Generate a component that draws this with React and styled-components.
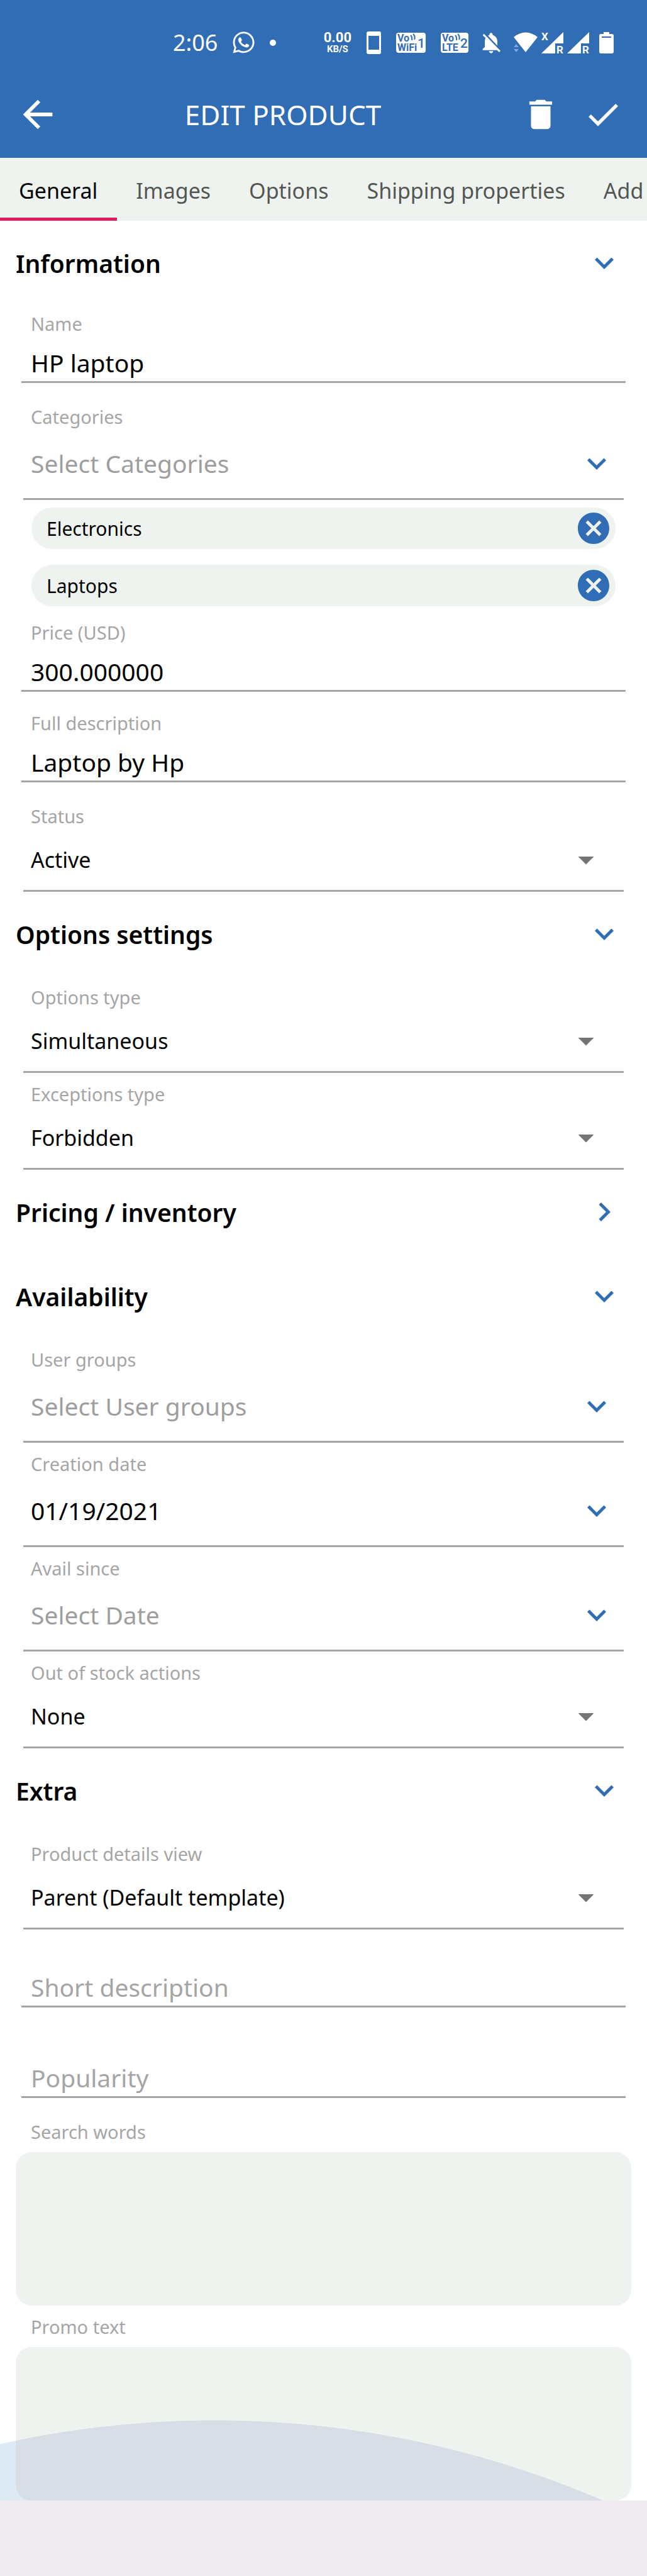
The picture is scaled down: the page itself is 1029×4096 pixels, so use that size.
import React, { useState } from "react";
import styled, { createGlobalStyle } from "styled-components";
import {
  MdArrowBack,
  MdArrowDropDown,
  MdCancel,
  MdCheck,
  MdChevronRight,
  MdDelete,
  MdExpandMore,
  MdNotificationsOff,
} from "react-icons/md";
import { FaWhatsapp } from "react-icons/fa";

const tabs = ["General", "Images", "Options", "Shipping properties", "Add"];

export default function App() {
  const [activeTab, setActiveTab] = useState("General");
  const [categories, setCategories] = useState(["Electronics", "Laptops"]);

  const removeCategory = (name) => {
    setCategories((prev) => prev.filter((item) => item !== name));
  };

  return (
    <Page>
      <GlobalStyle />
      <Header>
        <StatusBar />
        <AppBar>
          <IconButton type="button" aria-label="Back">
            <MdArrowBack size={70} />
          </IconButton>
          <Title>EDIT PRODUCT</Title>
          <Actions>
            <IconButton type="button" aria-label="Delete">
              <MdDelete size={62} />
            </IconButton>
            <IconButton type="button" aria-label="Save">
              <MdCheck size={64} />
            </IconButton>
          </Actions>
        </AppBar>
      </Header>
      <Tabs>
        {tabs.map((tab) => (
          <Tab
            key={tab}
            type="button"
            $active={tab === activeTab}
            onClick={() => setActiveTab(tab)}
          >
            {tab}
          </Tab>
        ))}
      </Tabs>
      <main>
        <Section title="Information">
          <TextField id="name" label="Name" value="HP laptop" />
          <Picker id="categories" label="Categories" placeholder="Select Categories" />
          <ChipList>
            {categories.map((name) => (
              <Chip key={name}>
                {name}
                <IconButton
                  type="button"
                  aria-label={`Remove ${name}`}
                  onClick={() => removeCategory(name)}
                >
                  <MdCancel size={60} color="#306db5" />
                </IconButton>
              </Chip>
            ))}
          </ChipList>
          <TextField id="price" label="Price (USD)" value="300.000000" />
          <TextField id="full-description" label="Full description" value="Laptop by Hp" />
          <SelectField id="status" label="Status" options={["Active", "Hidden", "Disabled"]} />
        </Section>
        <Section title="Options settings">
          <SelectField id="options-type" label="Options type" options={["Simultaneous", "Sequential"]} />
          <SelectField id="exceptions-type" label="Exceptions type" options={["Forbidden", "Allowed"]} />
        </Section>
        <Section title="Pricing / inventory" collapsed />
        <Section title="Availability">
          <Picker id="user-groups" label="User groups" placeholder="Select User groups" />
          <Picker id="creation-date" label="Creation date" value="01/19/2021" />
          <Picker id="avail-since" label="Avail since" placeholder="Select Date" />
          <SelectField id="out-of-stock" label="Out of stock actions" options={["None", "Buy in advance"]} />
        </Section>
        <Section title="Extra">
          <SelectField id="details-view" label="Product details view" options={["Parent (Default template)"]} />
          <TextField id="short-description" placeholder="Short description" />
          <TextField id="popularity" placeholder="Popularity" />
          <AreaField>
            <Label htmlFor="search-words">Search words</Label>
            <Area id="search-words" />
          </AreaField>
          <AreaField $wave>
            <Label htmlFor="promo-text">Promo text</Label>
            <Area id="promo-text" $wave />
          </AreaField>
        </Section>
      </main>
      <BottomBar />
    </Page>
  );
}

function StatusBar() {
  return (
    <Status>
      <StatusGroup $gap={22}>
        <Clock>2:06</Clock>
        <FaWhatsapp size={39} />
        <Dot />
      </StatusGroup>
      <StatusGroup $gap={16}>
        <StatusGroup $gap={24}>
          <Speed>
            <b>0.00</b>
            <small>KB/S</small>
          </Speed>
          <svg width="23" height="36" viewBox="0 0 23 36">
            <path fill="#fff" fillRule="evenodd" d="M3 0h17a3 3 0 0 1 3 3v30a3 3 0 0 1-3 3H3a3 3 0 0 1-3-3V3a3 3 0 0 1 3-3zM3 7v22h17V7z" />
          </svg>
          <NetworkBadge top="Vo" bottom="WiFi" slot="1" width={47} />
          <NetworkBadge top="Vo" bottom="LTE" slot="2" width={44} />
        </StatusGroup>
        <MdNotificationsOff size={40} />
        <StatusGroup $gap={6}>
          <svg width="38" height="33" viewBox="0 0 38 33">
            <path fill="#fff" d="M0 8Q19-7 38 8L19 32z" />
            <path fill="#7fa8d8" d="M0 24l4-5 4 5zM0 27h8l-4 5z" />
          </svg>
          <Signal roaming />
          <Signal />
        </StatusGroup>
        <svg width="23" height="34" viewBox="0 0 23 34">
          <path fill="#fff" fillRule="evenodd" d="M7 0h9v3h4a3 3 0 0 1 3 3v25a3 3 0 0 1-3 3H3a3 3 0 0 1-3-3V6a3 3 0 0 1 3-3h4zM4 7v2h15V7z" />
        </svg>
      </StatusGroup>
    </Status>
  );
}

function NetworkBadge({ top, bottom, slot, width }) {
  return (
    <BadgeSvg width={width} height="32" viewBox={`0 0 ${width} 32`}>
      <rect width={width} height="32" rx="4" fill="#fff" />
      <text x="2" y="14" fontSize="16">{top}</text>
      <text x="2" y="29" fontSize="16">{bottom}</text>
      <path d="M23 4q3 3 2 8M27 2q4 4 2 9" fill="none" stroke="#306db5" strokeWidth="2" />
      <text x={width - 13} y="24" fontSize="21" className="slot">{slot}</text>
    </BadgeSvg>
  );
}

function Signal({ roaming }) {
  return (
    <BadgeSvg width="35" height="34" viewBox="0 0 35 34">
      <path fill="#fff" d="M35 0v18H22v16H0z" />
      <text x="24" y="34" fontSize="17" className="light">R</text>
      {roaming && <text x="0" y="13" fontSize="17" className="light">X</text>}
    </BadgeSvg>
  );
}

function Section({ title, collapsed, children }) {
  const [open, setOpen] = useState(!collapsed);

  return (
    <section>
      <SectionHeader type="button" aria-expanded={open} onClick={() => setOpen(!open)}>
        {title}
        {open ? <MdExpandMore size={60} /> : <MdChevronRight size={60} />}
      </SectionHeader>
      {open && children}
    </section>
  );
}

function TextField({ id, label, value, placeholder }) {
  return (
    <TextWrapper>
      <Label htmlFor={id}>{label}</Label>
      <Input id={id} defaultValue={value} placeholder={placeholder} aria-label={label || placeholder} />
    </TextWrapper>
  );
}

function Picker({ id, label, value, placeholder }) {
  return (
    <PickerWrapper>
      <Label htmlFor={id}>{label}</Label>
      <PickerButton id={id} type="button" $empty={!value}>
        {value || placeholder}
        <MdExpandMore size={60} color="#306db5" />
      </PickerButton>
    </PickerWrapper>
  );
}

function SelectField({ id, label, options }) {
  return (
    <PickerWrapper>
      <Label htmlFor={id}>{label}</Label>
      <SelectBox>
        <select id={id}>
          {options.map((option) => (
            <option key={option}>{option}</option>
          ))}
        </select>
        <MdArrowDropDown size={60} color="#737573" />
      </SelectBox>
    </PickerWrapper>
  );
}

const GlobalStyle = createGlobalStyle`
  * {
    box-sizing: border-box;
  }
  body {
    margin: 0;
    background-color: #ffffff;
  }
  body, button, input, select, textarea {
    font-family: "Noto Sans", "Open Sans", sans-serif;
  }
  svg {
    display: block;
    flex-shrink: 0;
  }
`;

const Page = styled.div`
  display: flex;
  flex-direction: column;
`;

const Header = styled.header`
  background-color: #306db5;
  color: #ffffff;
`;

const Status = styled.div`
  display: flex;
  justify-content: space-between;
  align-items: center;
  height: 115px;
  padding: 20px 53px 0 275px;
`;

const StatusGroup = styled.div`
  display: flex;
  align-items: center;
  gap: ${({ $gap }) => $gap}px;
`;

const Clock = styled.span`
  font-size: 36px;
`;

const Dot = styled.span`
  width: 10px;
  height: 10px;
  border-radius: 50%;
  background-color: #ffffff;
`;

const Speed = styled.div`
  display: flex;
  flex-direction: column;
  align-items: center;
  font-family: Roboto, sans-serif;
  b {
    font-size: 22px;
    font-weight: 700;
    line-height: 20px;
  }
  small {
    font-size: 15px;
    font-weight: 700;
    line-height: 16px;
  }
`;

const BadgeSvg = styled.svg`
  overflow: visible;
  text {
    font-family: Roboto, sans-serif;
    font-weight: 700;
    fill: #306db5;
  }
  .slot {
    font-weight: 500;
  }
  .light {
    fill: #ffffff;
  }
`;

const AppBar = styled.div`
  display: flex;
  align-items: center;
  height: 136px;
  padding: 0 38px 2px 25px;
`;

const IconButton = styled.button`
  display: flex;
  padding: 0;
  border: none;
  background: none;
  color: inherit;
  cursor: pointer;
`;

const Title = styled.h1`
  flex: 1;
  margin: 0;
  font-size: 44px;
  font-weight: 400;
  text-align: center;
`;

const Actions = styled.div`
  display: flex;
  align-items: center;
  gap: 36px;
  margin-left: 24px;
`;

const Tabs = styled.nav`
  display: flex;
  height: 100px;
  overflow: hidden;
  background-color: #eef3ef;
`;

const Tab = styled.button`
  flex-shrink: 0;
  padding: 8px 31px 0 30px;
  border: none;
  border-bottom: 5px solid ${({ $active }) => ($active ? "#e21e62" : "transparent")};
  background: none;
  color: ${({ $active }) => ($active ? "#000000" : "#545654")};
  font-size: 34px;
  white-space: nowrap;
  cursor: pointer;
`;

const SectionHeader = styled.button`
  display: flex;
  justify-content: space-between;
  align-items: center;
  width: 100%;
  height: 134px;
  padding: 0 38px 0 25px;
  border: none;
  background: none;
  color: #000000;
  font-size: 39px;
  font-weight: 600;
  text-align: left;
  cursor: pointer;
  svg {
    color: #306db5;
  }
`;

const Label = styled.label`
  display: block;
  height: 36px;
  padding-left: 49px;
  color: #a5a5a5;
  font-size: 29px;
  line-height: 36px;
`;

const TextWrapper = styled.div`
  display: flex;
  flex-direction: column;
  padding-top: 12px;
  margin-bottom: 20px;
`;

const Input = styled.input`
  height: 76px;
  margin: 0 34px;
  padding: 14px 15px 0;
  border: none;
  border-bottom: 3px solid #a5a5a5;
  border-radius: 0;
  outline: none;
  background: none;
  color: #000000;
  font-size: 39px;
  &::placeholder {
    color: #a5a5a5;
    opacity: 1;
  }
`;

const PickerWrapper = styled.div`
  display: flex;
  flex-direction: column;
  padding-top: 16px;
`;

const PickerButton = styled.button`
  display: flex;
  justify-content: space-between;
  align-items: center;
  height: 114px;
  margin: 0 37px;
  padding: 0 13px 0 12px;
  border: none;
  border-bottom: 3px solid #a5a5a5;
  background: none;
  color: ${({ $empty }) => ($empty ? "#9e9e9e" : "#000000")};
  font-size: 39px;
  cursor: pointer;
`;

const SelectBox = styled.div`
  display: grid;
  align-items: center;
  height: 102px;
  margin: 0 37px;
  padding-top: 3px;
  border-bottom: 3px solid #a5a5a5;
  select {
    grid-area: 1 / 1;
    width: 100%;
    height: 96px;
    padding: 0 90px 0 12px;
    border: none;
    outline: none;
    appearance: none;
    background: none;
    color: #000000;
    font-size: 34px;
  }
  svg {
    grid-area: 1 / 1;
    justify-self: end;
    margin-right: 30px;
    pointer-events: none;
  }
`;

const ChipList = styled.ul`
  display: flex;
  flex-direction: column;
  gap: 25px;
  margin: 0;
  padding: 12px 50px;
  list-style: none;
`;

const Chip = styled.li`
  display: flex;
  justify-content: space-between;
  align-items: center;
  height: 66px;
  padding: 0 5px 0 24px;
  border-radius: 33px;
  background-color: #eef3ef;
  color: #000000;
  font-size: 30px;
`;

// the wave and the box over it share one circle, centred far below the page
const wave = (x, inside, outside) =>
  `radial-gradient(circle 1561px at ${x}px calc(100% + 1433px), ${inside} 1560px, ${outside} 1561px)`;

const AreaField = styled.div`
  display: flex;
  flex-direction: column;
  gap: 14px;
  padding: 16px 0 0;
  background: ${({ $wave }) => ($wave ? wave(341, "#deeaf6", "#ffffff") : "none")};
`;

const Area = styled.textarea`
  height: 244px;
  margin: 0 25px;
  padding: 20px 24px;
  border: none;
  border-radius: 25px;
  outline: none;
  resize: none;
  background: ${({ $wave }) => ($wave ? wave(316, "#d7dee6", "#eef3ef") : "#eef3ef")};
  color: #000000;
  font-size: 34px;
`;

const BottomBar = styled.footer`
  height: 120px;
  background-color: #efebee;
`;
